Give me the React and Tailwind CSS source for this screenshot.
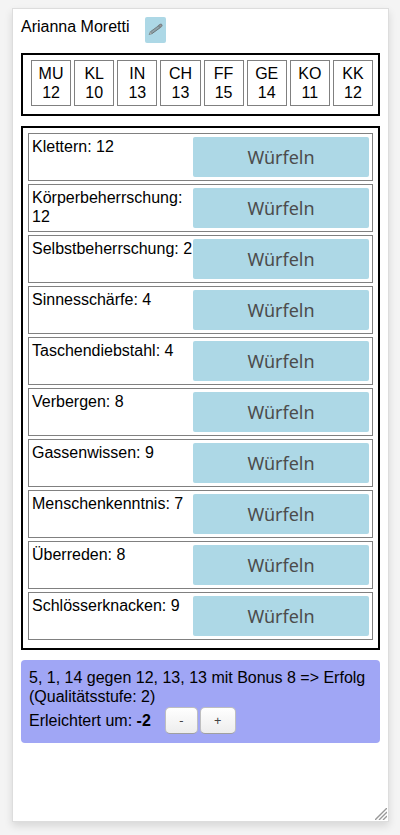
const attributes = [
  ['MU', 12], ['KL', 10], ['IN', 13], ['CH', 13],
  ['FF', 15], ['GE', 14], ['KO', 11], ['KK', 12],
];

const skills = [
  ['Klettern', 12],
  ['Körperbeherrschung', 12],
  ['Selbstbeherrschung', 2],
  ['Sinnesschärfe', 4],
  ['Taschendiebstahl', 4],
  ['Verbergen', 8],
  ['Gassenwissen', 9],
  ['Menschenkenntnis', 7],
  ['Überreden', 8],
  ['Schlösserknacken', 9],
];

function PencilIcon() {
  return (
    <svg width="15" height="13" viewBox="0 0 15 13" aria-hidden="true">
      <path d="M1 11.6 L2.4 8.6 L10.6 2.6 L12.2 4.8 L4 10.8 Z" fill="#8fa3aa" />
      <path d="M2.6 8.6 L10.8 2.6" stroke="#6b7679" strokeWidth="0.8" />
      <path d="M4 10.6 L12 4.8" stroke="#666f72" strokeWidth="0.9" />
      <path d="M1 11.6 L2.4 8.6 L4 10.8 Z" fill="#b9c0bd" stroke="#727c7f" strokeWidth="0.6" />
      <path d="M10.2 2.6 L12 1.2 Q13.3 0.6 14 1.7 Q14.5 2.8 13.7 3.6 L12.2 4.8 Z" fill="#858c8f" stroke="#646b6e" strokeWidth="0.6" />
      <path d="M12.2 1.9 L13.3 3.3" stroke="#a89c9b" strokeWidth="0.9" />
    </svg>
  );
}

function StepButton({ label, children, className }) {
  return (
    <button
      type="button"
      aria-label={label}
      className={`h-[27px] rounded-[5px] border border-[#bfbfbf] border-b-[#a0a0a0] bg-linear-to-b from-white to-[#ededed] text-center font-['Noto_Sans',sans-serif] text-[13px] leading-[19px] text-[#444] ${className}`}
    >
      {children}
    </button>
  );
}

export default function App() {
  return (
    <div className="flex min-h-screen bg-[#f4f4f4] pt-2 pr-[11px] pb-[13px] pl-3 font-['Liberation_Sans',Arial,sans-serif] text-[16px] leading-[19px] text-black">
      <main className="relative flex min-w-0 flex-1 flex-col gap-[10px] border border-[#dddddd] bg-white p-2 shadow-[0_4px_8px_rgba(0,0,0,0.12)]">
        <header className="flex items-start gap-[15px]">
          <h1>Arianna Moretti</h1>
          <button
            type="button"
            aria-label="Bearbeiten"
            className="flex h-[26px] w-[21px] items-center justify-center rounded-[2px] bg-[#add8e6] pb-[2px]"
          >
            <PencilIcon />
          </button>
        </header>

        <section className="grid grid-cols-8 gap-[3px] border-2 border-black pt-[5px] pr-[5px] pb-2 pl-2 text-center">
          {attributes.map(([name, value]) => (
            <div key={name} className="border border-[#808080] py-[3px]">
              <div>{name}</div>
              <div>{value}</div>
            </div>
          ))}
        </section>

        <ul className="flex flex-col gap-[3px] border-2 border-black px-[5px] pt-[5px] pb-2">
          {skills.map(([name, value]) => (
            <li key={name} className="flex items-start border border-[#808080] p-[3px]">
              <span className="min-w-0 flex-1">{name}: {value}</span>
              <button
                type="button"
                className="h-10 w-44 shrink-0 rounded-[2px] bg-[#add8e6] font-['Noto_Sans',sans-serif] text-[18px] leading-6 text-[#4c4c4c]"
              >
                Würfeln
              </button>
            </li>
          ))}
        </ul>

        <section className="rounded-[4px] bg-[#a0a6f5] p-2">
          <p>5, 1, 14 gegen 12, 13, 13 mit Bonus 8 =&gt; Erfolg (Qualitätsstufe: 2)</p>
          <div className="flex h-[29px] items-center">
            <span>Erleichtert um: <b>-2</b></span>
            <div className="ml-[14px] flex gap-[2px]">
              <StepButton label="Verringern" className="w-[33px]">-</StepButton>
              <StepButton label="Erhöhen" className="w-9">+</StepButton>
            </div>
          </div>
        </section>

        <svg className="absolute right-px bottom-px" width="12" height="12" viewBox="0 0 12 12" aria-hidden="true">
          <path d="M0 12 L12 0 M4 12 L12 4 M8 12 L12 8" stroke="#999" strokeWidth="1.4" fill="none" />
        </svg>
      </main>
    </div>
  );
}
